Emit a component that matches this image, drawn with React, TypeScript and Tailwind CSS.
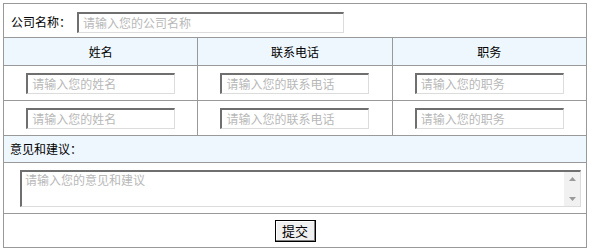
const font = { fontFamily: '"Noto Sans CJK SC", "Liberation Sans", sans-serif' };

const inputCls =
  'h-[21px] border-t-2 border-l-2 border-b border-r border-t-[#6f6f6f] border-l-[#6f6f6f] border-b-[#dcdcdc] border-r-[#dcdcdc] bg-white px-1 text-[12px] leading-none text-gray-700 placeholder:text-[#b8b8b8] outline-none';

const cell = 'border border-[#999] p-0';

const App = () => {
  const rows = [0, 1];

  return (
    <div className="p-[3px] bg-white w-[592px] h-[252px] text-[12px] text-black" style={font}>
      <table className="w-[584px] border-collapse table-fixed">
        <tbody>
          <tr className="h-[34px]">
            <td colSpan={3} className={cell}>
              <div className="flex items-center pl-[7px] pt-[3px]">
                <span className="w-[66px]">公司名称：</span>
                <input className={`${inputCls} w-[267px]`} placeholder="请输入您的公司名称" />
              </div>
            </td>
          </tr>
          <tr className="h-[28px] bg-[#eef7fe]">
            <th className={`${cell} font-normal w-[195px]`}>姓名</th>
            <th className={`${cell} font-normal w-[194px]`}>联系电话</th>
            <th className={`${cell} font-normal`}>职务</th>
          </tr>
          {rows.map((r) => (
            <tr key={r} className="h-[35px]">
              <td className={cell}>
                <div className="flex justify-center">
                  <input className={`${inputCls} w-[149px]`} placeholder="请输入您的姓名" />
                </div>
              </td>
              <td className={cell}>
                <div className="flex justify-center">
                  <input className={`${inputCls} w-[149px]`} placeholder="请输入您的联系电话" />
                </div>
              </td>
              <td className={cell}>
                <div className="flex justify-center">
                  <input className={`${inputCls} w-[149px]`} placeholder="请输入您的职务" />
                </div>
              </td>
            </tr>
          ))}
          <tr className="h-[27px] bg-[#eef7fe]">
            <td colSpan={3} className={`${cell} pl-[6px]`}>意见和建议：</td>
          </tr>
          <tr className="h-[51px]">
            <td colSpan={3} className={cell}>
              <div className="flex pl-[16px] pr-[5px]">
                <div className="flex w-full h-[37px] border-t-2 border-l-2 border-b border-r border-t-[#6f6f6f] border-l-[#6f6f6f] border-b-[#dcdcdc] border-r-[#dcdcdc] bg-white">
                  <textarea
                    className="flex-1 resize-none px-[3px] pt-0 text-[12px] leading-[16px] placeholder:text-[#b8b8b8] outline-none"
                    placeholder="请输入您的意见和建议"
                  />
                  <div className="w-[16px] bg-[#f1f1f1] flex flex-col items-center justify-between py-[5px] text-[#9a9a9a]">
                    <svg width="7" height="4" viewBox="0 0 7 4"><path d="M0 4 L3.5 0 L7 4 Z" fill="currentColor" /></svg>
                    <svg width="7" height="4" viewBox="0 0 7 4"><path d="M0 0 L3.5 4 L7 0 Z" fill="currentColor" /></svg>
                  </div>
                </div>
              </div>
            </td>
          </tr>
          <tr className="h-[34px]">
            <td colSpan={3} className={`${cell} text-center`}>
              <button className="inline-flex items-center justify-center w-[41px] h-[22px] border border-black bg-[#f0f0f0] shadow-[inset_-1px_-1px_0_#808080,inset_1px_1px_0_#fff] text-[13px] leading-none">
                提交
              </button>
            </td>
          </tr>
        </tbody>
      </table>
    </div>
  );
};

export default App;
